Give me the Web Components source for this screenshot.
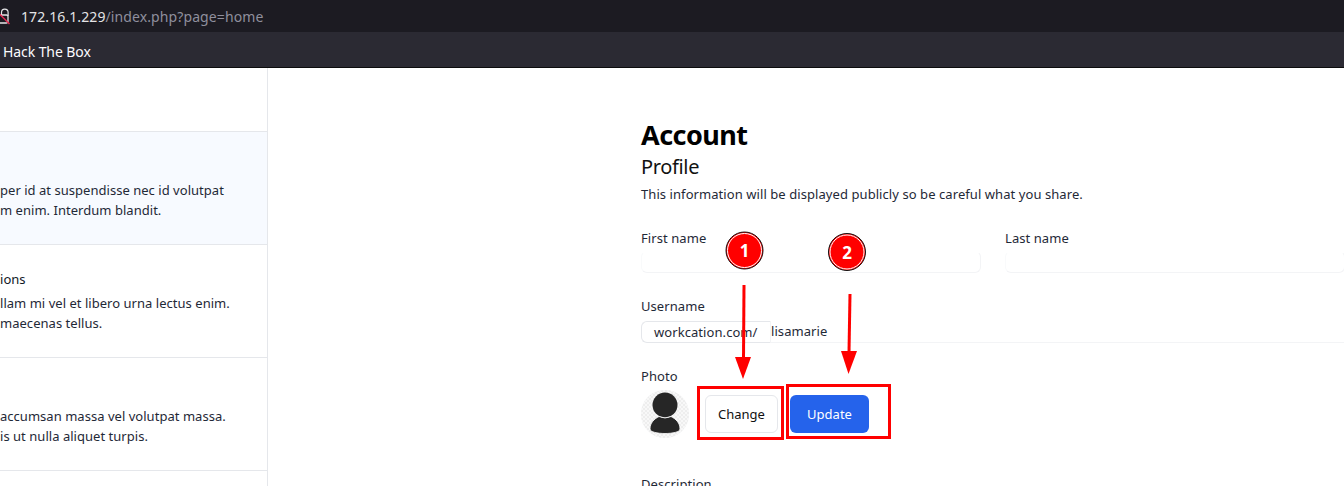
<!DOCTYPE html>
<html><head><meta charset="utf-8"><style>
html,body{margin:0;padding:0;width:1344px;height:486px;overflow:hidden;background:#fff;font-family:"Noto Sans",sans-serif}
</style></head><body>
<browser-chrome></browser-chrome>
<app-shell>
  <side-item slot="side" style="height:64px" ></side-item>
  <side-item slot="side" active pad="48"><div>per id at suspendisse nec id volutpat</div><div>m enim. Interdum blandit.</div></side-item>
  <side-item slot="side" head="ions" pad="24"><div>llam mi vel et libero urna lectus enim.</div><div>maecenas tellus.</div></side-item>
  <side-item slot="side" pad="48"><div>accumsan massa vel volutpat massa.</div><div>is ut nulla aliquet turpis.</div></side-item>
  <account-form slot="main"></account-form>
</app-shell>
<call-outs></call-outs>
<script>
const def=(n,html)=>customElements.define(n,class extends HTMLElement{
  connectedCallback(){ if(this.shadowRoot) return; this.attachShadow({mode:'open'}).innerHTML=typeof html==='function'?html(this):html; }
});
def('browser-chrome',`<style>
:host{display:block;color:#fbfbfe}
.url{height:32px;background:#1c1b22;display:flex;align-items:center;font-size:14px;letter-spacing:.1px;padding-left:21px;position:relative;color:#e4e4e6}
.url span{color:#8f8f9d}
.url svg{position:absolute;left:0;top:8px}
.bm{background:#2b2a33;font-size:14px;line-height:19px;letter-spacing:-.08px;padding:10px 0 0 3px;border-bottom:1px solid #0c0c0d;box-sizing:content-box;height:25px}
</style>
<div class="url"><svg width="12" height="18" viewBox="0 0 12 18"><path d="M1.500 7V4.500a3.300 3.300 0 0 1 6.600 0V8" fill="none" stroke="#e6e6e8" stroke-width="1.200"/><rect x="-3" y="7" width="11" height="8" rx="1.500" fill="none" stroke="#e6e6e8" stroke-width="1.300"/><path d="M-1 5.500L9.500 16" stroke="#e22850" stroke-width="1.400"/></svg>172.16.1.229<span>/index.php?page=home</span></div>
<div class="bm">Hack The Box</div>`);
def('app-shell',`<style>
:host{display:flex;height:418px;overflow:hidden}
.side{width:267px;border-right:1px solid #e5e7eb;flex:none}
.main{flex:1;min-width:0;padding-left:373px}
</style><div class="side"><slot name="side"></slot></div><div class="main"><slot name="main"></slot></div>`);
def('side-item',e=>{
 const h=e.getAttribute('head');const p=e.getAttribute('pad');
 return `<style>
:host{display:block;box-sizing:border-box;height:113px;border-bottom:1px solid #e5e7eb;font-size:13px;letter-spacing:.03px;line-height:20px;color:#1f2937;white-space:nowrap}
:host([active]){background:#f7faff}
.t{color:#111827;margin-bottom:4px;line-height:20px}
.w{padding-top:${p||0}px}
</style><div class="w">${h?`<div class="t">${h}</div>`:''}<slot></slot></div>`});
def('text-field',e=>`<style>
:host{display:block;font-size:13px;line-height:20px;color:#1f2937}
.box{height:22px;border:1px solid #f3f4f6;border-top-color:transparent;border-left-color:#f9fafb;border-right-color:#f3f4f6;border-radius:6px;box-sizing:border-box;margin-top:3px}
</style><div>${e.getAttribute('label')}</div><div class="box"></div>`);
def('account-form',`<style>
:host{display:block;color:#111;height:418px;letter-spacing:.07px}
h1{font-size:27px;letter-spacing:-.55px;line-height:34px;margin:0;padding-top:50px;font-weight:700;color:#000}
h2{font-size:20px;letter-spacing:-.35px;line-height:28px;margin:1px 0 0;font-weight:400;color:#111}
p{font-size:13px;line-height:20px;margin:3px 0 0;color:#1f2937}
.names{display:grid;grid-template-columns:340px 340px;gap:24px;margin-top:24px}
.lab{font-size:13px;line-height:20px;color:#1f2937}
.user{display:flex;height:22px;font-size:13px;line-height:20px;color:#1f2937;margin-top:5px}
.pre{box-sizing:border-box;width:130px;height:22px;border:1px solid #e5e7eb;border-right-color:#f3f4f6;border-radius:6px 0 0 6px;padding-left:12px;line-height:20px;white-space:nowrap}
.val{flex:1;box-sizing:border-box;height:22px;border-bottom:1px solid #f3f4f6;line-height:20px;white-space:nowrap}
.photo{display:flex;align-items:center;margin-top:4px}
.pic{width:48px;height:48px;flex:none;border-radius:50%;background:#f3f4f6;overflow:hidden}
button{font:13px "Noto Sans",sans-serif;border-radius:6px;height:38px;box-sizing:border-box}
.ch{background:#fff;border:1px solid #e5e7eb;color:#111;width:73px;margin-left:16px}
.up{background:#2563eb;border:0;color:#fff;width:79px;margin-left:12px}
</style>
<h1>Account</h1><h2>Profile</h2><p>This information will be displayed publicly so be careful what you share.</p>
<div class="names"><text-field label="First name"></text-field><text-field label="Last name"></text-field></div>
<div class="lab" style="margin-top:23px">Username</div>
<div class="user"><div class="pre">workcation.com/</div><div class="val">lisamarie</div></div>
<div class="lab" style="margin-top:23px">Photo</div>
<div class="photo"><div class="pic"><svg width="48" height="48" viewBox="0 0 48 48"><defs><pattern id="d" width="4" height="4" patternUnits="userSpaceOnUse"><rect width="4" height="4" fill="#f8f8f8"/><rect width="2" height="2" fill="#eeeeee"/><rect x="2" y="2" width="2" height="2" fill="#eeeeee"/></pattern></defs><rect width="48" height="48" fill="url(#d)"/><ellipse cx="24" cy="15" rx="12.500" ry="12.500" fill="#262626"/><path d="M9 39c0-6 4-10 9-12.500q6 3 12 0c5 2.500 9 6.500 9 12.500c0 6-30 6-30 0z" fill="#262626" stroke="#fff" stroke-width=".8"/></svg></div><button class="ch">Change</button><button class="up">Update</button></div>
<div class="lab" style="margin-top:36px">Description</div>`);
def('call-outs',`<style>
:host{display:block;position:absolute;left:0;top:0;width:1344px;height:486px;pointer-events:none}
svg{display:block}
text{font:700 17px "Noto Sans",sans-serif;fill:#fff;text-anchor:middle}
</style>
<svg width="1344" height="486" viewBox="0 0 1344 486">
<g fill="none" stroke="#f00" stroke-width="3"><rect x="698.500" y="387.500" width="84" height="51"/><rect x="787.500" y="385.500" width="102" height="52"/></g>
<g stroke="#f00" stroke-width="3" fill="none"><path d="M744 285L743.500 358"/><path d="M850 294L849 352"/></g>
<path d="M735 357H751L743 379Z" fill="#f00"/><path d="M841 351H857L848.500 374Z" fill="#f00"/>
<g fill="#f00" stroke="#111" stroke-width="1"><circle cx="744.500" cy="250.500" r="18.500"/><circle cx="847" cy="252" r="18.500"/></g>
<g fill="none" stroke="#fff" stroke-width="1"><circle cx="744.500" cy="250.500" r="17"/><circle cx="847" cy="252" r="17"/></g>
<text x="744.500" y="257">1</text><text x="847" y="258.500">2</text>
</svg>`);
</script>
</body></html>
